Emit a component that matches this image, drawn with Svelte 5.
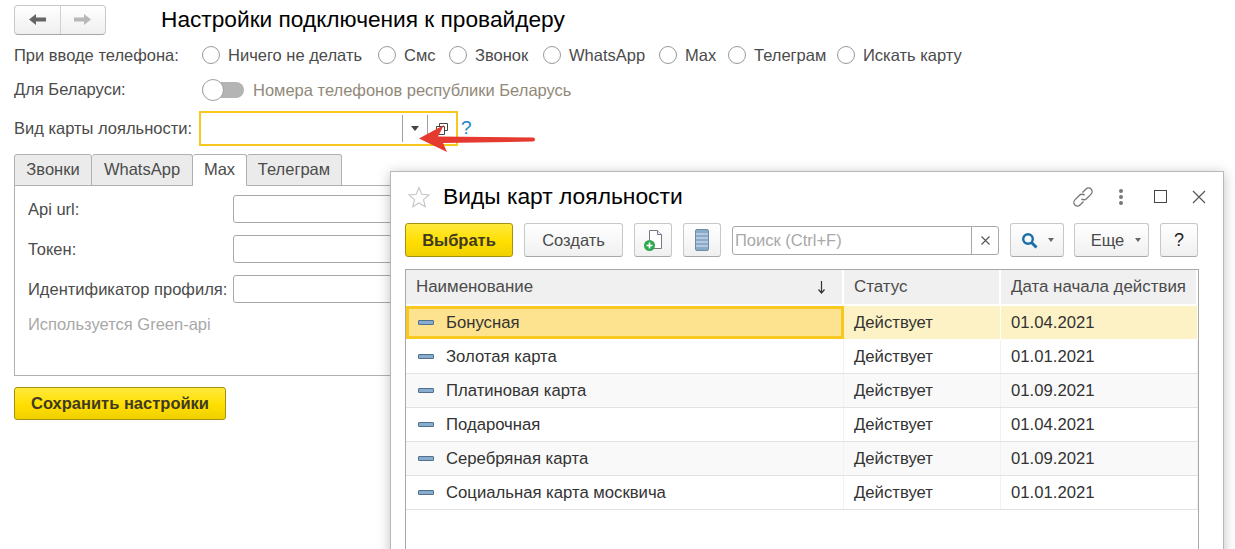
<script lang="ts">
const radios = [
    { label: "Ничего не делать", width: 176 },
    { label: "Смс", width: 71 },
    { label: "Звонок", width: 94 },
    { label: "WhatsApp", width: 116 },
    { label: "Max", width: 69 },
    { label: "Телеграм", width: 109 },
    { label: "Искать карту", width: 130 },
];
const tabs = [
    { label: "Звонки", width: 78 },
    { label: "WhatsApp", width: 101 },
    { label: "Max", width: 54 },
    { label: "Телеграм", width: 95 },
];
const fields = ["Api url:", "Токен:", "Идентификатор профиля:"];
const cards = [
    ["Бонусная", "Действует", "01.04.2021"],
    ["Золотая карта", "Действует", "01.01.2021"],
    ["Платиновая карта", "Действует", "01.09.2021"],
    ["Подарочная", "Действует", "01.04.2021"],
    ["Серебряная карта", "Действует", "01.09.2021"],
    ["Социальная карта москвича", "Действует", "01.01.2021"],
];
</script>

<div class="page">
    <div class="head">
        <div class="nav">
            <span class="nav-btn">
                <svg width="17" height="11" viewBox="0 0 17 11"><path d="M0 5.500 7 0V3.500h10v4H7V11z" fill="#666" /></svg>
            </span>
            <span class="nav-btn">
                <svg width="17" height="11" viewBox="0 0 17 11"><path d="M17 5.500 10 0V3.500H0v4h10V11z" fill="#b8b8b8" /></svg>
            </span>
        </div>
        <h1>Настройки подключения к провайдеру</h1>
    </div>

    <div class="row radio-row">
        <span class="label">При вводе телефона:</span>
        <div class="radios">
            {#each radios as r}
                <span class="radio" style="width: {r.width}px"><i></i>{r.label}</span>
            {/each}
        </div>
    </div>

    <div class="row toggle-row">
        <span class="label">Для Беларуси:</span>
        <span class="toggle"><i></i></span>
        <span class="toggle-text">Номера телефонов республики Беларусь</span>
    </div>

    <div class="row card-row">
        <span class="label">Вид карты лояльности:</span>
        <div class="combo">
            <span class="combo-input"></span>
            <span class="combo-btn"><i class="caret"></i></span>
            <span class="combo-btn open">
                <svg width="12" height="12" viewBox="0 0 12 12" fill="none" stroke="#444"><path d="M3.500 3.500V.5h8v7h-3" /><path d="M.5 3.500h8v8h-8z" /></svg>
            </span>
        </div>
        <span class="hint">?</span>
    </div>

    <div class="tabs">
        {#each tabs as t}
            <span class="tab" class:active={t.label === "Max"} style="width: {t.width}px">{t.label}</span>
        {/each}
    </div>
    <div class="panel">
        {#each fields as f}
            <div class="field">
                <span class="field-label">{f}</span>
                <span class="field-input"></span>
            </div>
        {/each}
        <div class="note">Используется Green-api</div>
    </div>

    <button class="primary save">Сохранить настройки</button>
</div>

<svg class="arrow" width="120" height="36" viewBox="0 0 120 36">
    <path d="M0 18.500 25 5 19 16.500 114 17.500a2 2 0 0 1 0 4L24 23 28 32z" fill="#e53a30" />
</svg>

<section class="window">
    <header class="win-head">
        <svg class="star" width="24" height="24" viewBox="0 0 24 24"><path d="M12 2.500 14.800 9.300 22 9.900 16.500 14.600 18.200 21.700 12 17.900 5.800 21.700 7.500 14.600 2 9.900 9.200 9.300z" fill="none" stroke="#c4c8cc" stroke-width="1.200" /></svg>
        <h2>Виды карт лояльности</h2>
        <div class="win-icons">
            <svg width="22" height="22" viewBox="0 0 22 22" fill="none" stroke="#777" stroke-width="1.300"><path d="M10.500 6.500 14 3a3.600 3.600 0 0 1 5.100 5.100L14.500 12.700a3.600 3.600 0 0 1-5.100 0" /><path d="M11.500 15.500 8 19a3.600 3.600 0 0 1-5.100-5.100L7.500 9.300a3.600 3.600 0 0 1 5.100 0" /></svg>
            <span class="dots"><i></i><i></i><i></i></span>
            <span class="square"></span>
            <svg class="close" width="14" height="14" viewBox="0 0 14 14" stroke="#555" stroke-width="1.200"><path d="M1 1 13 13M13 1 1 13" /></svg>
        </div>
    </header>

    <div class="toolbar">
        <button class="primary pick">Выбрать</button>
        <button class="btn create">Создать</button>
        <button class="btn icon">
            <svg width="22" height="24" viewBox="0 0 22 24">
                <path d="M7.500 2.500h8l4 4v14h-12z" fill="#fff" stroke="#778" />
                <path d="M15.500 2.500v4h4" fill="#eef" stroke="#778" />
                <circle cx="7.500" cy="17.500" r="5.500" fill="#2ea84f" />
                <path d="M7.500 14.500v6M4.500 17.500h6" stroke="#fff" stroke-width="1.600" />
            </svg>
        </button>
        <button class="btn icon">
            <svg width="14" height="22" viewBox="0 0 14 22">
                <rect x=".5" y=".5" width="13" height="21" rx="1.500" fill="#8ba9c9" stroke="#6d8aa8" />
                <path d="M1 5h12M1 9h12M1 13h12M1 17h12" stroke="#dfe7ef" stroke-width="1.200" />
            </svg>
        </button>
        <div class="search">
            <span class="search-text">Поиск (Ctrl+F)</span>
            <span class="search-clear">
                <svg width="9" height="9" viewBox="0 0 9 9" stroke="#555" stroke-width="1.100"><path d="M.5.5l8 8M8.500.5l-8 8" /></svg>
            </span>
        </div>
        <button class="btn find">
            <svg width="17" height="17" viewBox="0 0 17 17" fill="none" stroke="#1a6fa8" stroke-width="2.400"><circle cx="7" cy="7" r="4.800" /><path d="M10.500 10.500 15.500 15.500" stroke-width="3" /></svg>
            <i class="caret small"></i>
        </button>
        <button class="btn more">Еще<i class="caret small"></i></button>
        <button class="btn help">?</button>
    </div>

    <div class="table">
        <div class="tr th">
            <span class="cell name-head">Наименование
                <svg width="9" height="14" viewBox="0 0 9 14" fill="none" stroke="#333" stroke-width="1.200"><path d="M4.500 1v12M1.500 9.500 4.500 13l3-3.500" /></svg>
            </span>
            <span class="cell">Статус</span>
            <span class="cell">Дата начала действия</span>
        </div>
        {#each cards as c, i}
            <div class="tr" class:current={i === 0}>
                <span class="cell name"><i class="dash"></i>{c[0]}</span>
                <span class="cell">{c[1]}</span>
                <span class="cell">{c[2]}</span>
            </div>
        {/each}
    </div>
</section>

<style>
    :global(body) {
        margin: 0;
        height: 549px;
        overflow: hidden;
        background: #fff;
        font-family: "Liberation Sans", Arial, sans-serif;
        font-size: 16.5px;
        color: #4b4b4b;
    }

    .page {
        padding: 4px 14px 0;
        width: 900px;
        box-sizing: border-box;
    }

    .head {
        display: flex;
        align-items: center;
        height: 31px;
    }

    .nav {
        display: flex;
        width: 92px;
        height: 30px;
        box-sizing: border-box;
        border: 1px solid #c8c8c8;
        border-bottom-color: #a8a8a8;
        border-radius: 4px;
        background: linear-gradient(#fff, #efefef);
    }

    .nav-btn {
        flex: 1;
        display: flex;
        align-items: center;
        justify-content: center;
    }

    .nav-btn + .nav-btn {
        border-left: 1px solid #d0d0d0;
    }

    h1 {
        margin: 0 0 0 55px;
        font-size: 22.7px;
        font-weight: normal;
        color: #000;
    }

    .row {
        display: flex;
        align-items: center;
    }

    .label {
        width: 188px;
        flex: none;
    }

    .radio-row {
        margin-top: 8px;
        height: 24px;
    }

    .radios {
        display: flex;
    }

    .radio {
        display: flex;
        align-items: center;
        gap: 8px;
        white-space: nowrap;
    }

    .radio i {
        width: 18px;
        height: 18px;
        flex: none;
        box-sizing: border-box;
        border: 1px solid #9a9a9a;
        border-radius: 50%;
        background: #fff;
    }

    .toggle-row {
        margin-top: 11px;
        height: 24px;
    }

    .toggle-row .label {
        margin-top: -2px;
    }

    .toggle {
        width: 42px;
        height: 16px;
        margin-right: 9px;
        border-radius: 8px;
        background: #b4b4b4;
        display: flex;
        align-items: center;
    }

    .toggle i {
        width: 22px;
        height: 22px;
        box-sizing: border-box;
        border: 1px solid #a0a0a0;
        border-radius: 50%;
        background: #fff;
    }

    .toggle-text {
        color: #91897a;
    }

    .card-row {
        margin-top: 9px;
        height: 35px;
    }

    .card-row .label {
        width: 185px;
    }

    .combo {
        width: 259px;
        height: 35px;
        box-sizing: border-box;
        border: 2px solid #f9c81e;
        display: flex;
        align-items: center;
    }

    .combo-input {
        flex: 1;
    }

    .combo-btn {
        width: 24px;
        height: 27px;
        border-left: 1px solid #a0a0a0;
        display: flex;
        align-items: center;
        justify-content: center;
    }

    .combo-btn.open {
        width: 28px;
    }

    .caret {
        border: 4px solid transparent;
        border-top: 5px solid #444;
        border-bottom: 0;
    }

    .caret.small {
        border-width: 3px;
        border-top: 4px solid #666;
        border-bottom: 0;
    }

    .hint {
        margin-left: 3px;
        color: #1a84c8;
        font-size: 19px;
        position: relative;
        top: -1px;
    }

    .tabs {
        display: flex;
        margin-top: 8px;
    }

    .tab {
        height: 32px;
        box-sizing: border-box;
        text-align: center;
        line-height: 29px;
        background: #ebebeb;
        border: 1px solid #b0b0b0;
        border-left-width: 0;
        border-radius: 3px 3px 0 0;
    }

    .tab:first-child {
        border-left-width: 1px;
    }

    .tab.active {
        background: #fff;
        border-bottom-color: #fff;
        position: relative;
        z-index: 1;
    }

    .panel {
        height: 191px;
        margin-top: -1px;
        box-sizing: border-box;
        padding: 9px 13px;
        border: 1px solid #b0b0b0;
    }

    .field {
        display: flex;
        align-items: center;
        height: 28px;
        margin-bottom: 12px;
    }

    .field-label {
        width: 205px;
        flex: none;
        white-space: nowrap;
    }

    .field-input {
        width: 400px;
        height: 28px;
        box-sizing: border-box;
        border: 1px solid #a8a8a8;
        border-radius: 3px;
    }

    .note {
        color: #a8a8a8;
    }

    button {
        font: inherit;
        color: inherit;
        padding: 0;
        box-sizing: border-box;
    }

    .primary {
        border: 1px solid #a8900f;
        border-radius: 3px;
        background: linear-gradient(#ffe93d, #ffdf00 55%, #f0d000);
        font-weight: bold;
        color: #3f3a20;
    }

    .save {
        display: block;
        width: 212px;
        height: 33px;
        margin-top: 11px;
    }

    .arrow {
        position: absolute;
        left: 419px;
        top: 120px;
        z-index: 3;
    }

    .window {
        position: absolute;
        left: 390px;
        top: 171px;
        width: 834px;
        height: 400px;
        box-sizing: border-box;
        padding: 0 24px 0 14px;
        background: #fff;
        border: 1px solid #b8b8b8;
        box-shadow: 0 2px 12px rgba(0, 0, 0, 0.25);
        z-index: 2;
    }

    .win-head {
        display: flex;
        align-items: center;
        height: 49px;
    }

    .star {
        margin-left: 2px;
    }

    h2 {
        margin: 0 0 0 12px;
        flex: 1;
        font-size: 22.8px;
        font-weight: normal;
        color: #000;
    }

    .win-icons {
        display: flex;
        align-items: center;
        gap: 25px;
        margin-right: -7px;
    }

    .dots {
        display: flex;
        flex-direction: column;
        gap: 2px;
    }

    .dots i {
        width: 4px;
        height: 4px;
        border-radius: 50%;
        background: #777;
    }

    .square {
        width: 11px;
        height: 11px;
        margin-left: 6px;
        border: 1px solid #444;
    }

    .toolbar {
        display: flex;
        align-items: center;
        height: 34px;
        margin-top: 2px;
    }

    .btn {
        height: 34px;
        border: 1px solid #c8c8c8;
        border-bottom-color: #a8a8a8;
        border-radius: 3px;
        background: linear-gradient(#fff, #f0f0f0);
        color: #4b4b4b;
        display: flex;
        align-items: center;
        justify-content: center;
        flex: none;
    }

    .pick {
        width: 108px;
        height: 34px;
        flex: none;
    }

    .create {
        width: 99px;
        margin-left: 11px;
    }

    .icon {
        width: 38px;
        margin-left: 11px;
    }

    .search {
        width: 267px;
        height: 29px;
        margin-left: 11px;
        flex: none;
        box-sizing: border-box;
        border: 1px solid #a8a8a8;
        border-radius: 3px;
        display: flex;
        align-items: center;
    }

    .search-text {
        flex: 1;
        padding-left: 2px;
        color: #a8a8a8;
    }

    .search-clear {
        width: 26px;
        height: 27px;
        border-left: 1px solid #a8a8a8;
        display: flex;
        align-items: center;
        justify-content: center;
    }

    .find {
        width: 54px;
        margin-left: 11px;
        gap: 10px;
    }

    .more {
        width: 75px;
        margin-left: 10px;
        padding-left: 9px;
        gap: 11px;
    }

    .help {
        width: 38px;
        margin-left: 11px;
        font-size: 18px;
        color: #222;
    }

    .table {
        margin-top: 12px;
        height: 290px;
        border: 1px solid #a8a8a8;
        box-sizing: border-box;
    }

    .tr {
        display: grid;
        grid-template-columns: 438px 157px 1fr;
        height: 34px;
        border-bottom: 1px solid #e2e2e2;
        box-sizing: border-box;
    }

    .cell {
        display: flex;
        align-items: center;
        padding-left: 10px;
        white-space: nowrap;
        color: #333;
        font-size: 16.7px;
        border-right: 1px solid #f2f2f2;
    }

    .th {
        height: 36px;
        background: #f0f0f0;
        border-bottom: 2px solid #fff;
    }

    .th .cell {
        color: #4b4b4b;
        font-size: 16.9px;
        border-right: 2px solid #fff;
    }

    .name-head {
        justify-content: space-between;
        padding-right: 16px;
    }

    .tr:nth-child(4), .tr:nth-child(6) {
        background: #f9f9f9;
    }

    .current {
        background: #fdf2c5;
        border-bottom-color: #fff;
    }

    .current .cell {
        border-right-color: #fff;
    }

    .name {
        padding-left: 12px;
    }

    .current .name {
        background: #fde38f;
        border: 3px solid #f9c81e;
        padding-left: 9px;
    }

    .dash {
        width: 14px;
        height: 3px;
        margin-right: 12px;
        background: #86acd0;
        border: 1px solid #52708c;
        border-radius: 1px;
    }
</style>
